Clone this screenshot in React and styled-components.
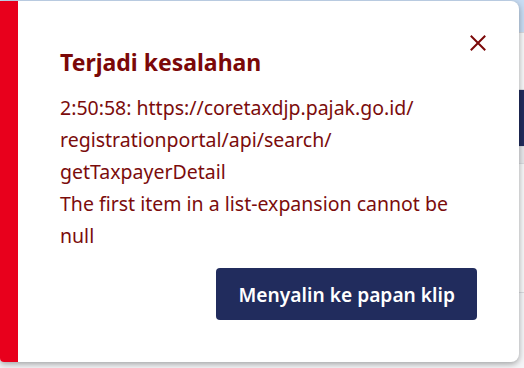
import React from "react";
import styled, { createGlobalStyle } from "styled-components";

const GlobalStyle = createGlobalStyle`
  html, body {
    margin: 0;
    padding: 0;
    background: #f4f5f7;
    font-family: "Noto Sans", "Open Sans", sans-serif;
  }
  #root {
    width: 524px;
    height: 368px;
    position: relative;
    overflow: hidden;
  }
`;

const Backdrop = styled.div`
  display: flex;
  flex-direction: column;
  height: 368px;
`;

const BackHeader = styled.div`
  height: 32px;
  background: #c8dcf3;
  border-bottom: 1px solid #d6d9de;
`;

const BackRow = styled.div`
  height: ${(p) => p.h}px;
  background: ${(p) => p.bg || "#f6f7f8"};
  border-bottom: 1px solid #d9dbdf;
`;

const Toast = styled.div`
  position: absolute;
  top: 1px;
  left: 0;
  width: 519px;
  height: 361px;
  display: flex;
  background: #fff;
  border-radius: 0 8px 8px 4px;
  box-shadow: 0 2px 6px rgba(0, 0, 0, 0.35);
  overflow: hidden;
`;

const Stripe = styled.div`
  width: 18px;
  flex: none;
  background: #e8001c;
`;

const Content = styled.div`
  flex: 1;
  position: relative;
  display: flex;
  flex-direction: column;
  padding: 46px 42px 0 42px;
  color: #7b0c0c;
`;

const Title = styled.h2`
  margin: 0;
  font-size: 23px;
  line-height: 30px;
  font-weight: 700;
  color: #7b0808;
`;

const Message = styled.div`
  margin-top: 15px;
  font-size: 19.5px;
  line-height: 32px;
  white-space: pre-line;
`;

const Actions = styled.div`
  display: flex;
  justify-content: flex-end;
  margin-top: 16px;
`;

const CopyButton = styled.button`
  height: 52px;
  padding: 0 22px 0 23px;
  border: none;
  border-radius: 4px;
  background: #212c5d;
  color: #fff;
  font-family: inherit;
  font-size: 19.2px;
  font-weight: 600;
  cursor: pointer;
`;

const CloseButton = styled.button`
  position: absolute;
  top: 32px;
  right: 31px;
  width: 20px;
  height: 20px;
  padding: 0;
  border: none;
  background: none;
  display: flex;
  align-items: center;
  justify-content: center;
  cursor: pointer;
`;

export default function App() {
  return (
    <>
      <GlobalStyle />
      <Backdrop>
        <BackHeader />
        <BackRow h={56} />
        <BackRow h={56} bg="#212c5d" />
        <BackRow h={16} bg="#e6e7ea" />
        <BackRow h={128} />
      </Backdrop>
      <Toast>
        <Stripe />
        <Content>
          <CloseButton aria-label="Tutup">
            <svg width="16" height="16" viewBox="0 0 16 16">
              <path
                d="M1.5 1.5 L14.5 14.5 M14.5 1.5 L1.5 14.5"
                stroke="#7b0808"
                strokeWidth="2"
                strokeLinecap="square"
              />
            </svg>
          </CloseButton>
          <Title>Terjadi kesalahan</Title>
          <Message>
            {"2:50:58: https://coretaxdjp.pajak.go.id/\nregistrationportal/api/search/\ngetTaxpayerDetail\nThe first item in a list-expansion cannot be\nnull"}
          </Message>
          <Actions>
            <CopyButton>Menyalin ke papan klip</CopyButton>
          </Actions>
        </Content>
      </Toast>
    </>
  );
}
